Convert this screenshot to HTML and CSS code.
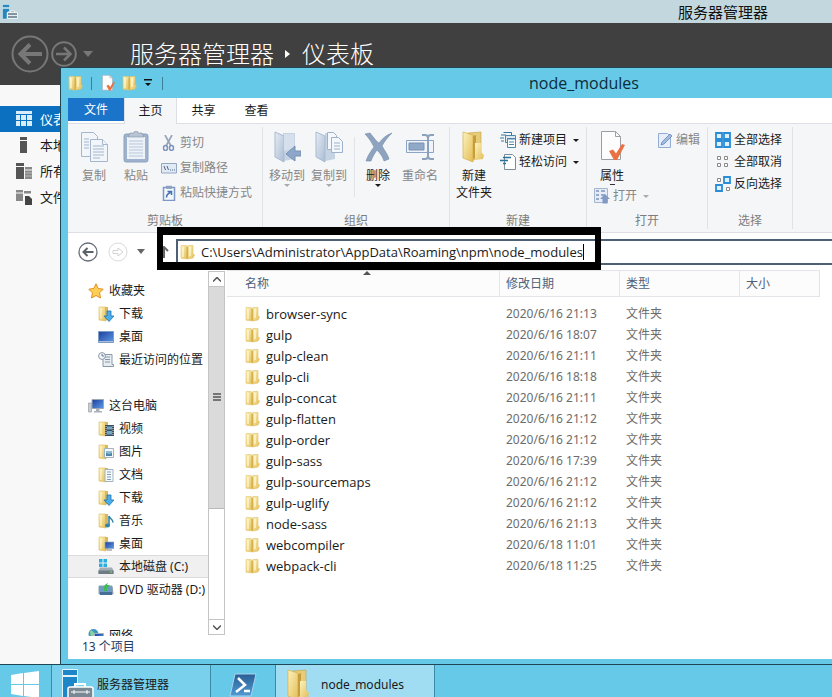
FILE: index.html
```html
<!DOCTYPE html>
<html lang="zh-CN">
<head>
<meta charset="utf-8">
<title>node_modules</title>
<link rel="stylesheet" href="styles.css">
</head>
<body>
<svg class="defs" aria-hidden="true">
  <defs>
    <linearGradient id="gold" x1="0" x2="1" y1="0" y2="1"><stop offset="0" stop-color="#fcf2bd"/><stop offset="1" stop-color="#e3bd55"/></linearGradient>
    <linearGradient id="goldDark" x1="0" x2="1"><stop offset="0" stop-color="#e9cc70"/><stop offset="1" stop-color="#d1a53a"/></linearGradient>
    <linearGradient id="ice" x1="0" x2="1" y1="0" y2="1"><stop offset="0" stop-color="#e6edf6"/><stop offset="1" stop-color="#a9bbd2"/></linearGradient>
    <linearGradient id="screen" x1="0" x2="1" y1="0" y2="1"><stop offset="0" stop-color="#1c3f9c"/><stop offset="1" stop-color="#5d9be6"/></linearGradient>
    <linearGradient id="shell" x1="0" x2="0" y1="0" y2="1"><stop offset="0" stop-color="#2a5d94"/><stop offset="1" stop-color="#4f9bd3"/></linearGradient>
  </defs>
  <symbol id="folder" viewBox="0 0 16 16">
    <path d="M1 1.500h5l1.500 1v12.500l-6.500-.8z" fill="url(#gold)" stroke="#e3c870" stroke-width=".6"/>
    <path d="M6.500 2.500l2 1v11.500l-2-.5z" fill="#d2aa45"/>
    <path d="M8 1.500h5v8l1.500 1.500-1.500 3-5 1z" fill="url(#gold)" stroke="#dfbf60" stroke-width=".6"/>
    <path d="M3 3v10M10 3v9" stroke="#fffadb" stroke-width="1.200"/>
  </symbol>
  <symbol id="folder-half" viewBox="0 0 16 16">
    <path d="M1 1h7v14l-7-1z" fill="url(#gold)" stroke="#dcbc5c" stroke-width=".6"/>
    <path d="M7 1h3v12l-3 2z" fill="#d9b75b"/><path d="M3 2v11" stroke="#fff8d0"/>
  </symbol>
  <symbol id="folder-big" viewBox="0 0 26 32">
    <path d="M7 2l13-1v25l-10 4z" fill="#e6cb78" stroke="#c9a03c" stroke-width=".6"/>
    <path d="M2 1l10 3v27l-10-4z" fill="url(#gold)" stroke="#d6b04a" stroke-width=".7"/>
    <path d="M12 5l3-1v13l-1 10-2 1z" fill="#c79c3a"/>
    <path d="M14 12h6v9l3 3-1 4-8 1z" fill="url(#gold)"/>
  </symbol>
  <symbol id="download" viewBox="0 0 16 16"><use href="#folder-half"/><path d="M9 5h4v5h3l-5 5.500L6 10h3z" fill="#49aee8" stroke="#1c72b4" stroke-width=".8"/></symbol>
  <symbol id="desktop" viewBox="0 0 16 16"><path d="M.5 2.500h15v11H.5z" fill="url(#screen)" stroke="#7f9cc4"/><path d="M1 12h14v1H1z" fill="#a8bedb"/></symbol>
  <symbol id="recent" viewBox="0 0 16 16">
    <path d="M4 2.500h10v10h1.500v2H5V6z" fill="#e8edf2" stroke="#8798a8"/><path d="M7 5h5M7 7.500h5M7 10h5" stroke="#8798a8"/><circle cx="4" cy="4" r="3.400" fill="#f6f8fa" stroke="#8798a8"/><path d="M4 2v2h2" stroke="#66788a" fill="none"/>
  </symbol>
  <symbol id="star" viewBox="0 0 16 16"><path d="M8 .8l2.200 4.700 5 .7-3.600 3.600.9 5.200L8 12.500 3.500 15l.9-5.200L.8 6.200l5-.7z" fill="#fbcf55" stroke="#e38f22"/></symbol>
  <symbol id="pc" viewBox="0 0 16 16"><path d="M.5 5h3v9h-3z" fill="#c9cdd2" stroke="#8f969e" stroke-width=".6"/><path d="M4 1.500h11.500v9H4z" fill="url(#screen)" stroke="#9ea8b5"/><path d="M8 11h3.500v2H14v1.500H6V13h2z" fill="#a9b0b8"/></symbol>
  <symbol id="video" viewBox="0 0 16 16"><use href="#folder-half"/><path d="M7 4h9v11H7z" fill="#3c4f60"/><path d="M9 5.500h5v3H9zm0 4.500h5v3.500H9z" fill="#73a7c4"/><path d="M8 5v9M15 5v9" stroke="#dfe6eb" stroke-dasharray="1 1"/></symbol>
  <symbol id="picture" viewBox="0 0 16 16"><use href="#folder-half"/><path d="M6.500 4.500h9v9h-9z" fill="#f4f8fb" stroke="#9fb3c4"/><path d="M8 7h6v4H8z" fill="#8cbbd6"/><path d="M8 9l3 1 3-1v3H8z" fill="#4f86a8"/></symbol>
  <symbol id="document" viewBox="0 0 16 16"><use href="#folder-half"/><path d="M7 2.500h8v12H7z" fill="#f7f9fb" stroke="#9fb3c4"/><path d="M9 5h4M9 7.500h4M9 10h4M9 12.500h4" stroke="#7f9db8"/></symbol>
  <symbol id="music" viewBox="0 0 16 16"><use href="#folder-half"/><path d="M11 3c1 3 4 3 4 6.500M11 3v9" stroke="#3384a8" stroke-width="1.600" fill="none"/><ellipse cx="9.500" cy="12.500" rx="2.500" ry="2" fill="#3384a8"/></symbol>
  <symbol id="desk-folder" viewBox="0 0 16 16"><use href="#folder-half"/><path d="M7 6h9v6.500H7z" fill="url(#screen)" stroke="#8ea5c2" stroke-width=".7"/><path d="M9 14h5" stroke="#77828f"/></symbol>
  <symbol id="disk" viewBox="0 0 16 16"><path d="M1 0h3.500v3.500H1zM5.500 0H9v3.500H5.500zM1 4.500h3.500V8H1zM5.500 4.500H9V8H5.500z" fill="#28aee0"/><path d="M2 8.500h12l1.500 3v3.500H.5v-3.500z" fill="#a4adb5"/><path d="M.5 11.500h15V15H.5z" fill="#717b84"/><path d="M12 13h2" stroke="#74e071"/></symbol>
  <symbol id="dvd" viewBox="0 0 16 16"><path d="M1 4h13l1 8H1z" fill="#6f9ac2" stroke="#8b9eae"/><path d="M2 10h12v3H2z" fill="#456f98"/><path d="M6 9V5c0-2 2-3 4-4l-1 2h3L9 6v3z" fill="#3dbb57"/></symbol>
  <symbol id="network" viewBox="0 0 16 16"><circle cx="5.500" cy="6" r="5" fill="#3d97c4"/><path d="M2 3c3-2 3 2 5 2S5 9 4 9 2 6 2 3z" fill="#8bd199"/><path d="M6.500 5.500h9V12h-9z" fill="url(#screen)" stroke="#a4b1c2"/></symbol>
  <symbol id="props" viewBox="0 0 26 30">
    <path d="M2.500.5h14l5 5v23h-19z" fill="#fdfdfe" stroke="#9a9fa6"/><path d="M16.500.5v5h5" fill="none" stroke="#9a9fa6"/><path d="M10 20l4-1.500 3 4 6-9.500 3 1-8 15h-3z" fill="#ea7144"/>
  </symbol>
  <symbol id="server" viewBox="0 0 16 16"><path d="M.5.500h7v3h-7zM.5 4.500h7V7L5 8.500v6.500H.5z" fill="#2787bd" stroke="#e5f2f7" stroke-width=".5"/><path d="M8.500 8.500V7h4v1.500M5.500 8.500h10v6h-10z" fill="#8294a0" stroke="#f3f8fa" stroke-width=".9"/><path d="M6 11.500h9" stroke="#e6eef2"/></symbol>
</svg>

<main class="desktop">
  <section class="manager">
    <header class="manager-title"><svg class="i16"><use href="#server"/></svg><span>服务器管理器</span></header>
    <div class="manager-head">
      <button class="plain" aria-label="后退"><svg class="back" viewBox="0 0 38 38"><circle cx="19" cy="19" r="17.500" fill="none" stroke="#777" stroke-width="2"/><path d="M31 19H10M19 9.500L9.500 19l9.500 9.500" fill="none" stroke="#777" stroke-width="4"/></svg></button>
      <button class="plain" aria-label="前进"><svg class="forward" viewBox="0 0 26 26"><circle cx="13" cy="13" r="11.800" fill="none" stroke="#777" stroke-width="2"/><path d="M5 13h14M13 6.500l6.500 6.500-6.500 6.500" fill="none" stroke="#777" stroke-width="2.500"/></svg></button>
      <svg class="drop" viewBox="0 0 10 6"><path d="M0 0h10L5 6z" fill="#777"/></svg>
      <h1>服务器管理器<svg class="crumb" viewBox="0 0 5 8"><path d="M0 0l5 4-5 4z" fill="#fff"/></svg>仪表板</h1>
    </div>
    <nav class="manager-nav">
      <a class="current" href="#"><svg class="i16" viewBox="0 0 16 16"><path d="M0 0h16v3H0zM0 4h4v5H0zM5 4h5v5H5zM11 4h5v5h-5zM0 10h4v5H0zM5 10h5v5H5zM11 10h5v5h-5z" fill="#d9ecfa"/></svg>仪表板</a>
      <a href="#"><svg class="i16" viewBox="0 0 16 16"><path d="M4 0h7v3H4zM4 4h7v12H4z" fill="#555"/></svg>本地</a>
      <a href="#"><svg class="i16" viewBox="0 0 16 16"><path d="M0 0h8v3H0zM0 4h8v12H0z" fill="#555"/><path d="M9 4h7v2.500H9zM9 7.500h7V16H9z" fill="#888"/><path d="M9 10h7M9 13h7" stroke="#ddd" stroke-width=".6"/></svg>所有</a>
      <a href="#"><svg class="i16" viewBox="0 0 16 16"><path d="M0 1h7v2.500H0zM8 2h7v2.500H8zM0 4.500h7V12H0z" fill="#888"/><path d="M9 7h4l3 3v6H9z" fill="#444"/></svg>文件</a>
    </nav>
  </section>

  <section class="explorer">
    <header class="titlebar">
      <div class="quick">
        <svg class="i16"><use href="#folder"/></svg><i class="sep"></i>
        <svg class="i16"><use href="#props"/></svg>
        <svg class="i16"><use href="#folder"/></svg>
        <svg class="custom" viewBox="0 0 8 8"><path d="M0 0h8v1.500H0zM1 4h6L4 7z" fill="#111"/></svg><i class="sep"></i>
      </div>
      <span class="title">node_modules</span>
    </header>
    <nav class="tabs">
      <button class="file">文件</button><button class="active">主页</button><button>共享</button><button>查看</button>
    </nav>
    <div class="ribbon">
      <section class="group clipboard">
        <div class="tools">
          <button class="big dim"><svg viewBox="0 0 28 32"><g fill="#f2f6fb" stroke="#a5b6cc"><path d="M1.500 1.500h12l4 4v20h-16z"/><path d="M10.500 8.500h12l5 5v17h-17z"/><path d="M4 8h5M4 11h5M4 14h5M4 17h5M13 15h11M13 18h11M13 21h11M13 24h11M13 27h7M22.500 8.500v5h5"/></g></svg>复制</button>
          <button class="big dim"><svg viewBox="0 0 28 32"><rect x="2" y="3" width="24" height="28" rx="2" fill="#9fb2cd" stroke="#8ea3c0"/><path d="M5 6h18v22H5z" fill="#edf2f9"/><path d="M8 2h4a2 2 0 014 0h4l2 4H6z" fill="#b8c4d4" stroke="#8291a5" stroke-width=".6"/><path d="M7 10h14M7 13h14M7 16h14M7 19h14M7 22h14M7 25h14" stroke="#b9c7db"/></svg>粘贴</button>
          <div class="stack three">
            <button class="small dim"><svg viewBox="0 0 16 16"><path d="M4 0l6 11M11 0L5 11" stroke="#92a3b8" stroke-width="1.600"/><ellipse cx="4.500" cy="13" rx="2" ry="2.500" fill="none" stroke="#7d94bb" stroke-width="1.500"/><ellipse cx="10.500" cy="13" rx="2" ry="2.500" fill="none" stroke="#7d94bb" stroke-width="1.500"/></svg>剪切</button>
            <button class="small dim"><svg viewBox="0 0 16 16"><path d="M.5 3.500h15v9.500H.5z" fill="#e1e9f4" stroke="#93a7c2"/><path d="M3 6l1.500 4M6 6l1.500 4M9 10h1M11 10h1M13 10h1" stroke="#4f6686"/></svg>复制路径</button>
            <button class="small dim"><svg viewBox="0 0 16 16"><path d="M2.500 2.500h11v13h-11z" fill="#f3f7fc" stroke="#7d98c4" stroke-width="1.500"/><path d="M5 .8h6v3H5z" fill="#8ba0bf"/><path d="M5.500 12.500c0-3 1-4 4-5M6.500 6.500h4V10" fill="none" stroke="#456fae" stroke-width="1.500"/></svg>粘贴快捷方式</button>
          </div>
        </div>
        <h2>剪贴板</h2>
      </section>
      <section class="group organize">
        <div class="tools">
          <button class="big dim"><svg viewBox="0 0 28 32"><path d="M10 2h12v26l-12 2z" fill="#c6d3e3"/><path d="M2 1l9 4v26l-9-5z" fill="url(#ice)" stroke="#aabbd0"/><path d="M11 3h10v14l-10 3z" fill="#d6e0ec"/><path d="M28 20h-6v-5l-9 8 9 7v-5h6z" fill="#8ca7c9" stroke="#7891b3"/></svg>移动到<b class="caret"></b></button>
          <button class="big dim"><svg viewBox="0 0 28 32"><path d="M10 2h10v26l-10 2z" fill="#c6d3e3"/><path d="M1 1l9 4v26l-9-5z" fill="url(#ice)" stroke="#aabbd0"/><g fill="#f4f8fc" stroke="#9fb2cb"><path d="M12.500 1.500h6l3 3v14h-9z"/><path d="M16.500 6.500h7l4 4v11h-11z"/><path d="M19 12h6M19 15h6M19 18h6"/></g></svg>复制到<b class="caret"></b></button>
          <i class="rule"></i>
          <button class="big"><svg viewBox="0 0 28 32"><path d="M1 3l5-1c4 5 7 9 9 10 3-4 7-8 13-10-5 5-8 9-10 13 3 5 6 9 7 13l-5 2c-1-4-4-8-7-11-3 4-5 8-6 11H2c2-6 5-10 8-14C7 10 4 6 1 3z" fill="#8da3bf" stroke="#7489a6" stroke-width=".6"/></svg>删除<b class="caret"></b></button>
          <button class="big dim"><svg viewBox="0 0 28 32"><path d="M.5 9.500h27v12H.5z" fill="#f0f4fa" stroke="#8ca4c5"/><path d="M3 12h15v7H3z" fill="#91a9c9" stroke="#7892b6"/><path d="M16 4h3q3 0 3 3v18q0 3-3 3h-3M28 4h-3q-3 0-3 3v18q0 3 3 3h3" fill="none" stroke="#8ca1bc" stroke-width="2"/></svg>重命名</button>
        </div>
        <h2>组织</h2>
      </section>
      <section class="group create">
        <div class="tools">
          <button class="big"><svg viewBox="0 0 26 32"><use href="#folder-big"/></svg>新建<br>文件夹</button>
          <div class="stack">
            <button class="small"><svg viewBox="0 0 16 16"><path d="M3.500.5h8v3M1 3h5M0 6h4M1 9h3" fill="none" stroke="#3b7496"/><path d="M5.500 3.500h10v7h-10z" fill="#dbe9f2" stroke="#4b88ab"/><path d="M7.500 6.500h8v9h-8z" fill="#fff" stroke="#4b88ab"/><path d="M7 7h9M9 10h5M9 12.500h5" stroke="#4b88ab"/></svg>新建项目<b class="caret"></b></button>
            <button class="small"><svg viewBox="0 0 16 16"><path d="M4.500.5h8l3 3v12h-11z" fill="#fff" stroke="#7d8c99"/><path d="M3 3.500h8M0 6.500h8M3 9.500h3" stroke="#26739d" stroke-width="1.500"/></svg>轻松访问<b class="caret"></b></button>
          </div>
        </div>
        <h2>新建</h2>
      </section>
      <section class="group open">
        <div class="tools">
          <div class="stack props-col">
            <button class="big"><svg viewBox="0 0 26 30"><use href="#props"/></svg>属性<b class="bar"></b></button>
            <button class="small dim"><svg viewBox="0 0 16 16"><path d="M.5.500h13v14H.5z" fill="#e6edf7" stroke="#a5b4cf"/><path d="M2 3h3M7 3h4M2 7h3M7 7h4M2 11h3" stroke="#7e96bf" stroke-width="1.500"/><path d="M11 6l5 5h-2.500v4.500h-5V11H6z" fill="#8299c4"/></svg>打开<b class="caret"></b></button>
          </div>
          <button class="small dim"><svg viewBox="0 0 16 16"><path d="M1.500 1.500h9l3 3v11h-12z" fill="#e7eef9" stroke="#95acd2"/><path d="M4 13l1-3 8-8 2 2-8 8z" fill="#a3bcdf" stroke="#6487bb" stroke-width=".8"/></svg>编辑</button>
        </div>
        <h2>打开</h2>
      </section>
      <section class="group select">
        <div class="stack">
          <button class="small"><svg viewBox="0 0 16 16"><path d="M1 1h6v6H1zM9 1h6v6H9zM1 9h6v6H1zM9 9h6v6H9z" fill="#ddf0fd" stroke="#2b8cd6" stroke-width="1.800"/></svg>全部选择</button>
          <button class="small"><svg viewBox="0 0 16 16"><path d="M2.500 2.500h3v3h-3zM9.500 2.500h3v3h-3zM2.500 9.500h3v3h-3zM9.500 9.500h3v3h-3z" fill="#fff" stroke="#888"/></svg>全部取消</button>
          <button class="small"><svg viewBox="0 0 16 16"><path d="M2.500 2.500h3v3h-3zM11.500 11.500h3v3h-3z" fill="#fff" stroke="#888"/><path d="M9 1h6v6H9zM1 9h6v6H1z" fill="#ddf0fd" stroke="#2b8cd6" stroke-width="1.800"/></svg>反向选择</button>
        </div>
        <h2>选择</h2>
      </section>
    </div>

    <div class="location">
      <button class="plain" aria-label="返回"><svg class="i20" viewBox="0 0 20 20"><circle cx="10" cy="10" r="9" fill="#fff" stroke="#666d74" stroke-width="1.300"/><path d="M15.500 10h-10M9.500 6L5.500 10l4 4" fill="none" stroke="#5b6269" stroke-width="2"/></svg></button>
      <button class="plain" aria-label="前进" disabled><svg class="i20" viewBox="0 0 20 20"><circle cx="10" cy="10" r="9" fill="#fff" stroke="#dadada"/><path d="M5 8.500h5V6l5 4-5 4v-2.500H5z" fill="none" stroke="#d2d2d2"/></svg></button>
      <svg class="history" viewBox="0 0 8 5"><path d="M0 0h8L4 5z" fill="#666"/></svg>
      <svg class="up" viewBox="0 0 10 12"><path d="M5 12V1M1 5l4-4 4 4" fill="none" stroke="#666" stroke-width="2"/></svg>
      <label class="address"><svg class="i16"><use href="#folder"/></svg><input type="text" aria-label="地址" value="C:\Users\Administrator\AppData\Roaming\npm\node_modules"><i class="cursor"></i></label>
      <div class="marker"></div>
    </div>

    <div class="content">
      <nav class="tree">
        <a class="root" href="#"><svg class="i16"><use href="#star"/></svg>收藏夹</a>
        <a href="#"><svg class="i16"><use href="#download"/></svg>下载</a>
        <a href="#"><svg class="i16"><use href="#desktop"/></svg>桌面</a>
        <a href="#"><svg class="i16"><use href="#recent"/></svg>最近访问的位置</a>
        <a class="root later" href="#"><svg class="i16"><use href="#pc"/></svg>这台电脑</a>
        <a href="#"><svg class="i16"><use href="#video"/></svg>视频</a>
        <a href="#"><svg class="i16"><use href="#picture"/></svg>图片</a>
        <a href="#"><svg class="i16"><use href="#document"/></svg>文档</a>
        <a href="#"><svg class="i16"><use href="#download"/></svg>下载</a>
        <a href="#"><svg class="i16"><use href="#music"/></svg>音乐</a>
        <a href="#"><svg class="i16"><use href="#desk-folder"/></svg>桌面</a>
        <a class="chosen" href="#"><svg class="i16"><use href="#disk"/></svg>本地磁盘 (C:)</a>
        <a href="#"><svg class="i16"><use href="#dvd"/></svg>DVD 驱动器 (D:)</a>
        <a class="root later" href="#"><svg class="i16"><use href="#network"/></svg>网络</a>
      </nav>
      <div class="scroll">
        <button aria-label="向上滚动"><svg viewBox="0 0 8 5"><path d="M0 4.500l4-4 4 4" fill="none" stroke="#555" stroke-width="1.500"/></svg></button>
        <div class="thumb"><svg viewBox="0 0 8 8"><path d="M0 1h8M0 4h8M0 7h8" stroke="#555" stroke-width="1.500"/></svg></div>
        <div class="track"></div>
        <button aria-label="向下滚动"><svg viewBox="0 0 8 5"><path d="M0 .5l4 4 4-4" fill="none" stroke="#555" stroke-width="1.500"/></svg></button>
      </div>
      <div class="files">
        <table>
          <thead><tr><th class="name">名称<b class="sort"></b></th><th class="date">修改日期</th><th class="type">类型</th><th class="size">大小</th></tr></thead>
          <tbody>
            <tr><td><svg class="i16"><use href="#folder"/></svg>browser-sync</td><td>2020/6/16 21:13</td><td>文件夹</td><td></td></tr>
            <tr><td><svg class="i16"><use href="#folder"/></svg>gulp</td><td>2020/6/16 18:07</td><td>文件夹</td><td></td></tr>
            <tr><td><svg class="i16"><use href="#folder"/></svg>gulp-clean</td><td>2020/6/16 21:11</td><td>文件夹</td><td></td></tr>
            <tr><td><svg class="i16"><use href="#folder"/></svg>gulp-cli</td><td>2020/6/16 18:18</td><td>文件夹</td><td></td></tr>
            <tr><td><svg class="i16"><use href="#folder"/></svg>gulp-concat</td><td>2020/6/16 21:11</td><td>文件夹</td><td></td></tr>
            <tr><td><svg class="i16"><use href="#folder"/></svg>gulp-flatten</td><td>2020/6/16 21:12</td><td>文件夹</td><td></td></tr>
            <tr><td><svg class="i16"><use href="#folder"/></svg>gulp-order</td><td>2020/6/16 21:12</td><td>文件夹</td><td></td></tr>
            <tr><td><svg class="i16"><use href="#folder"/></svg>gulp-sass</td><td>2020/6/16 17:39</td><td>文件夹</td><td></td></tr>
            <tr><td><svg class="i16"><use href="#folder"/></svg>gulp-sourcemaps</td><td>2020/6/16 21:12</td><td>文件夹</td><td></td></tr>
            <tr><td><svg class="i16"><use href="#folder"/></svg>gulp-uglify</td><td>2020/6/16 21:12</td><td>文件夹</td><td></td></tr>
            <tr><td><svg class="i16"><use href="#folder"/></svg>node-sass</td><td>2020/6/16 21:13</td><td>文件夹</td><td></td></tr>
            <tr><td><svg class="i16"><use href="#folder"/></svg>webcompiler</td><td>2020/6/18 11:01</td><td>文件夹</td><td></td></tr>
            <tr><td><svg class="i16"><use href="#folder"/></svg>webpack-cli</td><td>2020/6/18 11:25</td><td>文件夹</td><td></td></tr>
          </tbody>
        </table>
      </div>
    </div>
    <footer class="status">13 个项目</footer>
  </section>
</main>

<footer class="taskbar">
  <button class="start" aria-label="开始"><svg viewBox="0 0 28 28"><path d="M0 4l12-2v11H0zM13 2l15-2v13H13zM0 14h12v11L0 23zM13 14h15v13l-15-2z" fill="#fff"/></svg></button>
  <button class="task"><svg viewBox="0 0 32 32"><path d="M.5.500h15v6H.5zM.5 7.500h15v9l-9 3V31h-6z" fill="#1c86c8" stroke="#e3f3fa"/><path d="M13 18v-3h10v3" fill="none" stroke="#fff" stroke-width="2"/><rect x="6" y="18" width="25" height="14" rx="2" fill="#788894" stroke="#fff" stroke-width="1.500"/><path d="M9 23h19M12 21v4M25 21v4" stroke="#fff"/></svg>服务器管理器</button>
  <button class="task shell" aria-label="PowerShell"><svg viewBox="0 0 28 24"><path d="M6 1h21l-5 22H1z" fill="url(#shell)" stroke="#a8d4ee"/><path d="M9 5l7 7-9 7M15 18h6" fill="none" stroke="#fff" stroke-width="2.500"/></svg></button>
  <button class="task on"><svg viewBox="0 0 26 32"><use href="#folder-big"/></svg>node_modules</button>
</footer>
</body>
</html>
```
FILE: styles.css
```css
* { box-sizing: border-box; }
html, body { height: 100%; }
body {
  margin: 0;
  display: flex;
  flex-direction: column;
  overflow: hidden;
  font: 12px/16px "Noto Sans", "Noto Sans CJK SC", sans-serif;
  color: #1a1a1a;
  background: #66c9e8;
}
button, input { font: inherit; color: inherit; background: none; border: 0; margin: 0; padding: 0; }
a { color: inherit; text-decoration: none; }
svg { display: block; flex: none; }
h1, h2 { margin: 0; font-weight: 400; }
.defs { position: absolute; width: 0; height: 0; }
.i16 { width: 16px; height: 16px; }
.i20 { width: 20px; height: 20px; }
.caret { display: block; width: 0; border: 3px solid transparent; border-top-color: currentColor; border-bottom: 0; }

.desktop { position: relative; flex: 1; min-height: 0; background: #f8f8f8; }

/* Server manager */
.manager-title { display: flex; align-items: center; height: 23px; padding-left: 2px; background: #c3d8de; font-size: 15px; line-height: 20px; color: #111; }
.manager-title span { margin-left: 660px; white-space: nowrap; }
.manager-head { display: flex; align-items: center; height: 62px; padding-left: 11px; background: #404040; }
.back { width: 38px; height: 38px; }
.forward { width: 26px; height: 26px; margin-left: 2px; }
.drop { width: 10px; height: 6px; margin-left: 6px; }
.manager-head h1 { display: flex; align-items: center; margin-left: 37px; color: #fff; font-size: 24px; line-height: 32px; font-weight: 300; }
.crumb { width: 5px; height: 8px; margin: 0 12px 0 11px; }
.manager-nav { padding-top: 21px; width: 61px; overflow: hidden; white-space: nowrap; font-size: 13px; }
.manager-nav a { display: flex; align-items: center; gap: 8px; height: 26px; padding-left: 16px; }
.manager-nav .current { background: #0a70bf; color: #fff; }

/* Explorer window */
.explorer {
  position: absolute;
  inset: 68px 0 0 61px;
  display: flex;
  flex-direction: column;
  background: #fff;
  border: solid #66c9e8;
  border-width: 0 0 5px 7px;
  outline: 1px solid #1e4654;
}
.titlebar { display: flex; align-items: center; height: 30px; flex: none; background: #66c9e8; }
.quick { display: flex; align-items: center; width: 97px; }
.quick .sep { flex: none; width: 1px; height: 13px; margin: 0 8px 0 7px; background: #3c7e98; }
.quick svg + svg { margin-left: 6px; }
.quick .custom { width: 8px; height: 8px; }
.quick .custom + .sep { margin: 0 0 0 10px; }
.title { margin-left: 364px; font-family: "Open Sans", "Noto Sans CJK SC", sans-serif; font-size: 16px; line-height: 22px; color: #0c2c3a; }

.tabs { display: flex; height: 26px; flex: none; border-bottom: 1px solid #dcdfe3; }
.tabs button { width: 53px; }
.tabs .file { width: 56px; height: 23px; background: #1a74c9; color: #fff; }
.tabs .active { height: 26px; background: #f5f6f8; border: solid #dcdfe3; border-width: 0 1px; }

.ribbon { display: flex; height: 109px; flex: none; background: #f5f6f8; border-bottom: 1px solid #dcdfe3; }
.group { display: flex; flex-direction: column; justify-content: space-between; margin: 3px 0; padding-top: 2px; border-right: 1px solid #dfe2e6; }
.group h2 { font-size: 12px; text-align: center; color: #7d7d7d; }
.tools { display: flex; align-items: flex-start; }
.clipboard { width: 195px; }
.organize { width: 187px; }
.create { width: 137px; }
.open { width: 121px; }
.select { width: 85px; }
.big { display: flex; flex-direction: column; align-items: center; width: 42px; padding-top: 2px; white-space: nowrap; line-height: 17px; }
.big svg { width: 28px; height: 32px; margin-bottom: 4px; }
.clipboard .tools { padding-left: 5px; }
.organize .tools { padding-left: 3px; }
.create .big { width: 48px; }
.create .big svg { width: 26px; }
.dim { color: #868686; }
.dim .caret { color: #aaa; }
.small { display: flex; align-items: center; gap: 3px; height: 22px; white-space: nowrap; }
.small svg { width: 16px; height: 16px; }
.small .caret { margin-left: 3px; }
.stack { display: flex; flex-direction: column; align-items: flex-start; }
.clipboard .stack { margin-left: 4px; padding-top: 1px; }
.three .small { height: 25px; }
.rule { width: 1px; height: 60px; margin: 8px 2px 0 4px; background: #e0e3e7; }
.create .stack { margin-left: 2px; }
.open .tools { padding-left: 4px; gap: 8px; }
.props-col .big svg { width: 26px; height: 30px; margin-bottom: 6px; }
.props-col .small { height: 22px; margin-left: 3px; }
.bar { width: 5px; height: 1px; background: #333; }
.select .stack { padding-left: 7px; }

.location { position: relative; display: flex; align-items: center; height: 37px; flex: none; padding-left: 10px; }
.location .plain + .plain { margin-left: 10px; }
.history { width: 8px; height: 5px; margin-left: 9px; }
.up { width: 10px; height: 12px; margin-left: 14px; }
.address { flex: 1; display: flex; align-items: center; height: 26px; margin-left: 7px; padding-left: 2px; border: solid #4e6174; border-width: 2px 0 2px 2px; font-family: "Open Sans", "Noto Sans CJK SC", sans-serif; font-size: 13px; }
.address input { field-sizing: content; margin-left: 5px; outline: 0; }
.cursor { width: 1px; height: 16px; background: #000; }
.marker { position: absolute; left: 89px; top: -6px; width: 444px; height: 43px; border: 6px solid #000; border-width: 8px 6px; pointer-events: none; }

.content { display: flex; flex: 1; min-height: 0; }
.tree { width: 140px; padding-top: 9px; overflow: hidden; }
.tree a { display: flex; align-items: center; gap: 5px; height: 23px; padding-left: 30px; white-space: nowrap; }
.tree .root { padding-left: 20px; }
.tree .later { margin-top: 23px; }
.tree .chosen { background: #f0f0f0; border: solid #dcdcdc; border-width: 1px 0; }
.scroll { display: flex; flex-direction: column; width: 17px; margin: 1px 0; border: solid #c4c4c4; border-width: 0 1px; }
.scroll button { display: grid; place-items: center; height: 16px; border: 1px solid #c4c4c4; border-width: 1px 0; }
.scroll svg { width: 8px; }
.thumb { flex: 64; display: grid; place-items: center; background: #dadada; border-bottom: 1px solid #b8b8b8; }
.track { flex: 32; }
.files { flex: 1; padding: 0 12px 0 2px; overflow: hidden; }
table { width: 100%; border-collapse: separate; border-spacing: 0; table-layout: fixed; }
th { position: relative; height: 27px; padding: 0 0 0 6px; text-align: left; font-weight: 400; color: #4f6078; background: #fcfcfd; border: solid #e2e4e7; border-width: 1px 1px 1px 0; }
th.name { padding-left: 18px; }
.date, .type { width: 120px; }
.size { width: 80px; }
.sort { position: absolute; top: 0; left: 50%; border: 4px solid transparent; border-top: 0; border-bottom-color: #555; }
td { height: 21px; padding: 0 0 0 6px; color: #6d6d6d; white-space: nowrap; }
td:first-child { display: flex; align-items: center; gap: 5px; padding-left: 18px; font-family: "Open Sans", sans-serif; font-size: 13px; color: #1a1a1a; }
tbody::before { content: ""; display: block; height: 6px; }
.status { height: 23px; flex: none; padding-left: 14px; line-height: 22px; color: #243b5e; }

/* Taskbar */
.taskbar { display: flex; align-items: flex-start; height: 33px; flex: none; overflow: hidden; background: #66c9e8; border-top: 1px solid #1e4654; }
.taskbar button { display: flex; align-items: center; height: 40px; border-right: 1px solid #3a8ba6; }
.start { width: 52px; padding-left: 11px; }
.start svg { width: 28px; height: 28px; }
.task { width: 159px; padding-left: 10px; gap: 3px; background: #78d0ec; }
.task svg { width: 32px; height: 32px; }
.task.shell { width: 65px; padding-left: 18px; background: #66c9e8; }
.shell svg { width: 28px; height: 24px; }
.task.on { gap: 9px; background: #a0ddf2; }
.on svg { width: 26px; }
```
